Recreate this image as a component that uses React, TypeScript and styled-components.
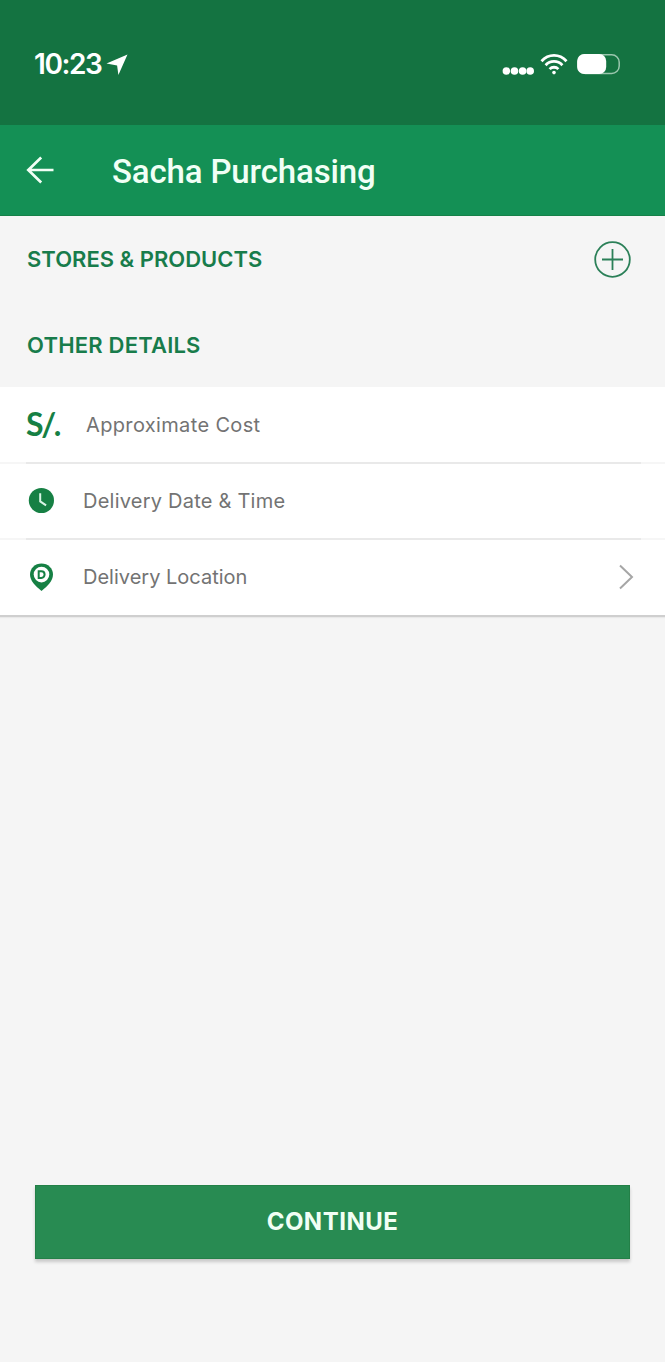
import React from "react";
import styled, { createGlobalStyle } from "styled-components";

const GlobalStyle = createGlobalStyle`
  * { box-sizing: border-box; }
  body { margin: 0; background: #f5f5f5; }
`;

const Screen = styled.main`
  display: flex;
  flex-direction: column;
  width: 665px;
  height: 1362px;
  background: #f5f5f5;
  font-family: Inter, "Liberation Sans", sans-serif;
`;

const StatusBar = styled.div`
  display: flex;
  justify-content: space-between;
  height: 125px;
  padding: 52px 45px 0 34px;
  background: #147341;
  color: #fff;
`;

const StatusGroup = styled.div`
  display: flex;
  height: 24px;
  align-items: center;
`;

const Label = styled.span<{ $size: number; $weight: number; $spacing?: number }>`
  font-size: ${(p) => p.$size}px;
  font-weight: ${(p) => p.$weight};
  letter-spacing: ${(p) => p.$spacing ?? 0}px;
  line-height: 1.2;
  white-space: nowrap;
`;

const Clock = styled(Label)`
  padding-top: 2px;
`;

const LocationArrow = styled.svg`
  margin: 2px 0 0 4px;
`;

const AppBar = styled.header`
  display: flex;
  align-items: center;
  height: 91px;
  padding: 0 26px;
  background: #149055;
  border-bottom: 1px solid #168148;
  color: #f1fff5;
`;

const Title = styled.h1`
  margin: 3px 0 0 58px;
  font: 500 33px/40px Roboto, sans-serif;
  letter-spacing: -0.15px;
`;

const SectionHeader = styled.div<{ $height: number }>`
  display: flex;
  align-items: center;
  justify-content: space-between;
  height: ${(p) => p.$height}px;
  padding: 0 34px 0 27px;
  color: #187c4b;
`;

const DetailsList = styled.div`
  background: #fff;
  border-bottom: 2px solid #cfcfcf;
  box-shadow: 0 1px 1px #e9e9e9;
`;

const DetailRow = styled.div<{ $gap: number; $height: number }>`
  display: flex;
  align-items: center;
  gap: ${(p) => p.$gap}px;
  height: ${(p) => p.$height}px;
  padding: 0 31px 1px 27px;
  color: #737373;

  &:first-child { padding: 1px 31px 0 27px; }

  &:not(:last-child) {
    border-bottom: 2px solid;
    border-image: linear-gradient(90deg, #f6f6f6 27px, #e9e9e9 27px, #e9e9e9 640px, #f6f6f6 640px) 1;
  }

  & > svg:last-child { margin-left: auto; }
`;

const Currency = styled.span`
  width: 35px;
  padding-bottom: 2px;
  color: #168044;
  font: 700 32px/36px Lato, sans-serif;
  letter-spacing: -2.4px;
  text-indent: -1px;
`;

const ContinueButton = styled.button`
  display: flex;
  align-items: center;
  justify-content: center;
  height: 74px;
  margin: auto 35px 103px;
  padding: 0;
  border: 1px solid #238047;
  background: #288b52;
  box-shadow: 0 3px 3px #c9c9c9;
  color: #f1fff5;
  font-family: inherit;
`;

const SignalDots = () => (
  <svg width="32" height="24" viewBox="0 0 32 24" fill="#fff">
    <circle cx="4.4" cy="19" r="3.8" />
    <circle cx="12.5" cy="19" r="3.8" />
    <circle cx="20.6" cy="19" r="3.8" />
    <circle cx="28.2" cy="19" r="3.8" />
  </svg>
);

const WifiIcon = styled.svg`
  margin-left: 6px;
`;

const Wifi = () => (
  <WifiIcon width="28" height="24" viewBox="0 0 28 24" fill="none" stroke="#fff" strokeWidth="2.8">
    <path d="M1.5 9.2C8.5 1.5 19.5 1.5 26.5 9.2M5.6 13.2c4.7-5 12.1-5 16.8 0M9.6 17.1c2.4-2.5 6.4-2.5 8.8 0" />
    <circle cx="14" cy="20.6" r="1.8" fill="#fff" stroke="none" />
  </WifiIcon>
);

const BatteryIcon = styled.svg`
  margin-left: 9px;
`;

const Battery = () => (
  <BatteryIcon width="43" height="24" viewBox="0 0 43 24">
    <rect x=".8" y="2.8" width="41.4" height="18.6" rx="7.5" fill="none" stroke="#9bc7ae" strokeWidth="1.5" />
    <rect x=".2" y="2" width="29" height="20" rx="7" fill="#fff" />
  </BatteryIcon>
);

export default function App() {
  return (
    <>
      <GlobalStyle />
      <Screen>
        <StatusBar>
          <StatusGroup>
            <Clock $size={28} $weight={600} $spacing={-1.4}>10:23</Clock>
            <LocationArrow width="22" height="22" viewBox="0 0 22 22" fill="#fff">
              <path d="M21.5.5 12.4 21 11.1 11.6.5 9.6Z" />
            </LocationArrow>
          </StatusGroup>
          <StatusGroup>
            <SignalDots />
            <Wifi />
            <Battery />
          </StatusGroup>
        </StatusBar>
        <AppBar>
          <svg width="28" height="28" viewBox="0 0 28 28" fill="none" stroke="currentColor" strokeWidth="2.7">
            <path d="M27.5 14H2.5M15.2 1.5 2.3 14l12.9 12.5" />
          </svg>
          <Title>Sacha Purchasing</Title>
        </AppBar>
        <SectionHeader $height={87}>
          <Label $size={22} $weight={600}>STORES &amp; PRODUCTS</Label>
          <svg width="37" height="37" viewBox="0 0 37 37" fill="none" stroke="#2b8058" strokeWidth="1.8">
            <circle cx="18.5" cy="18.5" r="17.3" />
            <path d="M8 18.5h21M18.5 8v21" />
          </svg>
        </SectionHeader>
        <SectionHeader $height={84}>
          <Label $size={22} $weight={600} $spacing={0.2}>OTHER DETAILS</Label>
        </SectionHeader>
        <DetailsList>
          <DetailRow $gap={24} $height={77}>
            <Currency>S/.</Currency>
            <Label $size={20} $weight={400} $spacing={0.35}>Approximate Cost</Label>
          </DetailRow>
          <DetailRow $gap={27} $height={76}>
            <svg width="29" height="29" viewBox="0 0 29 29">
              <circle cx="14.4" cy="14.5" r="12.6" fill="#168044" />
              <path d="M13.2 7.2v8.2l5.9 4" fill="none" stroke="#d9f5e5" strokeWidth="2" />
            </svg>
            <Label $size={20} $weight={400} $spacing={0.23}>Delivery Date &amp; Time</Label>
          </DetailRow>
          <DetailRow $gap={27} $height={75}>
            <svg width="29" height="30" viewBox="0 0 29 30">
              <path d="M14.5 1.5C8 1.5 3 6.3 3 12.6 3 19 8.4 24.2 14.5 29 20.6 24.2 26 19 26 12.6 26 6.3 21 1.5 14.5 1.5Z" fill="#168044" />
              <circle cx="14.5" cy="12.6" r="7.8" fill="#fff" />
              <path d="M11.7 9.3h2.6c4.4 0 4.4 6.6 0 6.6h-2.6Z" fill="none" stroke="#168044" strokeWidth="2" />
            </svg>
            <Label $size={20} $weight={400}>Delivery Location</Label>
            <svg width="15" height="26" viewBox="0 0 15 26" fill="none" stroke="#a6a6a6" strokeWidth="2">
              <path d="m1 1.5 12 11.5L1 24.5" />
            </svg>
          </DetailRow>
        </DetailsList>
        <ContinueButton>
          <Label $size={24} $weight={700} $spacing={0.5}>CONTINUE</Label>
        </ContinueButton>
      </Screen>
    </>
  );
}
